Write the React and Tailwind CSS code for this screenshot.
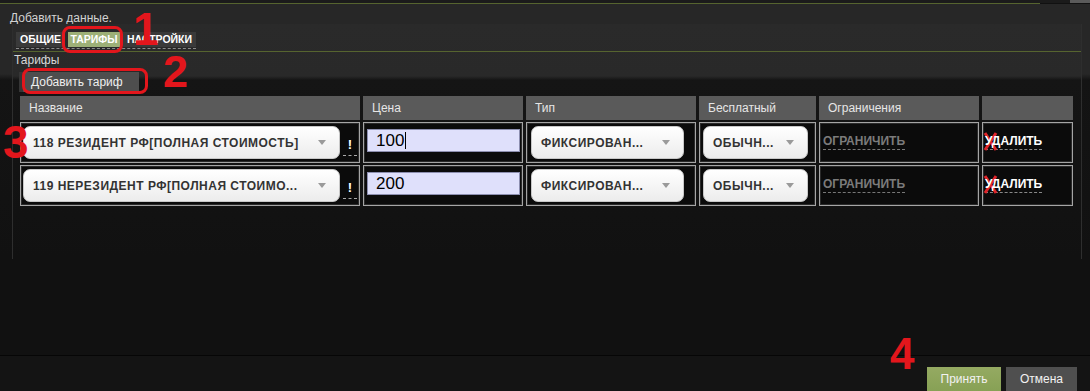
import React from "react";

function Caret() {
  return (
    <svg width="8" height="5" viewBox="0 0 8 5" className="shrink-0">
      <path d="M0 0 L8 0 L4 5 Z" fill="#9a9a9a" />
    </svg>
  );
}

function Select({ className, text }) {
  return (
    <div
      className={
        "h-[33px] rounded-[7px] border border-[#c8c8c8] bg-[linear-gradient(to_bottom,#ffffff,#ececec)] flex items-center justify-between pl-[9px] pr-[13px] text-[12px] font-bold text-[#333] tracking-[0.5px] whitespace-nowrap " +
        className
      }
    >
      <span>{text}</span>
      <Caret />
    </div>
  );
}

function Cell({ children, className = "" }) {
  return (
    <div
      className={
        "border border-[#a5a5a5] bg-[#0b0b0b] shadow-[inset_0_0_0_1px_#2a2a2a] flex " +
        className
      }
    >
      {children}
    </div>
  );
}

function Row({ name, price, cursor }) {
  return (
    <>
      <Cell className="items-center pl-[2px]">
        <Select className="w-[317px]" text={name} />
        <span className="ml-[3px] mt-[8px] w-[14px] text-center text-[13px] font-bold leading-[14px] text-white border-b border-dashed border-[#aaa] pb-[3px]">
          !
        </span>
      </Cell>
      <Cell className="items-start pl-[3px] pt-[6px]">
        <div className="h-[23px] w-[153px] bg-[#dfe0fb] border border-[#8d8fb0] flex items-center pl-[8px] text-[17px] leading-none text-black">
          <span className={cursor ? "border-r border-black pr-[1px]" : ""}>{price}</span>
        </div>
      </Cell>
      <Cell className="items-center pl-[4px]">
        <Select className="w-[153px]" text="ФИКСИРОВАН..." />
      </Cell>
      <Cell className="items-center pl-[3px]">
        <Select className="w-[105px]" text="ОБЫЧН..." />
      </Cell>
      <Cell className="items-center pl-[3px]">
        <span className="text-[12px] font-bold leading-[14px] text-[#7b7b7b] border-b border-dashed border-[#777] pb-[1px] mt-[-2px]">
          ОГРАНИЧИТЬ
        </span>
      </Cell>
      <Cell className="items-center pl-[2px]">
        <span className="relative text-[12px] font-bold leading-[14px] text-white border-b border-dashed border-[#888] pb-[1px] mt-[-2px]">
          <svg width="15" height="19" viewBox="0 0 15 19" className="absolute left-[-2px] top-[-2px]">
            <path d="M2 1 L13 18 M13 1 L2 18" stroke="#e0242a" strokeWidth="3" />
          </svg>
          <span className="relative">УДАЛИТЬ</span>
        </span>
      </Cell>
    </>
  );
}

export default function App() {
  return (
    <div className="relative w-[1090px] h-[391px] overflow-hidden bg-[#111111] font-['Liberation_Sans',Arial,sans-serif] flex flex-col">
      {/* top strip */}
      <div className="h-[3px] flex bg-[#1b1b1b] shrink-0">
        <div className="flex-1" />
        <div className="w-[20px] bg-[#5a5a5a]" />
      </div>
      <div className="h-px bg-[#56642f] mr-[50px] shrink-0" />
      <div className="h-[20px] shrink-0 bg-[#272727] pl-[10px] pt-[7px] text-[12px] leading-[14px] text-[#d2d2d2]">
        Добавить данные.
      </div>

      {/* main panel area */}
      <div className="h-[235px] shrink-0 bg-[linear-gradient(to_bottom,#272727_0px,#272727_50px,#141414_56px,#111111_100%)]">
        <div className="ml-[12px] w-[1070px] h-full border-l border-r border-[#2e2e2e] bg-[linear-gradient(to_bottom,#2a2a2a_0px,#292929_52px,#151515_56px,#111111_100%)] flex flex-col">
          {/* tabs */}
          <div className="pt-[8px] pl-[3px] flex">
            <div className="flex gap-[3px] border-b border-dashed border-[#8a8a8a] pb-[1px]">
              <div className="h-[15px] w-[49px] bg-[#3a3a3a] flex items-center justify-center text-[10.5px] font-bold text-white">
                ОБЩИЕ
              </div>
              <div className="h-[15px] w-[52px] bg-[#9db077] flex items-center justify-center text-[10.5px] font-bold text-white">
                ТАРИФЫ
              </div>
              <div className="h-[15px] w-[73px] bg-[#3a3a3a] flex items-center justify-center text-[10.5px] font-bold text-white">
                НАСТРОЙКИ
              </div>
            </div>
          </div>
          <div className="mt-[2px] h-px bg-[#56642f]" />
          <div className="pl-[1px] text-[12px] leading-[14px] text-[#d8d8d8] mt-[1px]">Тарифы</div>
          <div className="mt-[5px] ml-[6px] flex">
            <div className="h-[20px] bg-[#363636] flex items-center pl-[4px]">
              <div className="h-[20px] w-[116px] bg-[#4e4e4e] flex items-center pl-[8px] text-[12px] text-[#eeeeee]">
                Добавить тариф
              </div>
            </div>
          </div>

          {/* table */}
          <div className="mt-[4px] ml-[7px] grid grid-cols-[340px_160px_170px_117px_160px_91px] gap-x-[3px] gap-y-[2px] auto-rows-[41px] grid-rows-[24px]">
            <div className="bg-[#5a5a5a] flex items-center pl-[9px] text-[12px] text-[#e6e6e6]">Название</div>
            <div className="bg-[#5a5a5a] flex items-center pl-[9px] text-[12px] text-[#e6e6e6]">Цена</div>
            <div className="bg-[#5a5a5a] flex items-center pl-[9px] text-[12px] text-[#e6e6e6]">Тип</div>
            <div className="bg-[#5a5a5a] flex items-center pl-[9px] text-[12px] text-[#e6e6e6]">Бесплатный</div>
            <div className="bg-[#5a5a5a] flex items-center pl-[9px] text-[12px] text-[#e6e6e6]">Ограничения</div>
            <div className="bg-[#5a5a5a]" />
            <Row name="118 РЕЗИДЕНТ РФ[ПОЛНАЯ СТОИМОСТЬ]" price="100" cursor />
            <Row name="119 НЕРЕЗИДЕНТ РФ[ПОЛНАЯ СТОИМО..." price="200" />
          </div>
        </div>
      </div>

      <div className="h-[96px] shrink-0" />
      <div className="h-px bg-[#060606] shrink-0" />
      <div className="flex-1 bg-[#141414] flex justify-end items-start pt-[11px] pr-[13px] gap-[5px]">
        <div className="h-[26px] w-[74px] bg-[linear-gradient(to_bottom,#95aa62,#86a054)] flex items-center justify-center pb-[2px] text-[12px] text-[#f2f2f2]">
          Принять
        </div>
        <div className="h-[26px] w-[71px] bg-[#4f4f4f] flex items-center justify-center pb-[2px] text-[12px] text-[#f2f2f2]">
          Отмена
        </div>
      </div>

      {/* red annotations */}
      <div className="absolute left-[62px] top-[26px] w-[61px] h-[27px] border-[3px] border-[#e3161c] rounded-[8px]" />
      <div className="absolute left-[22px] top-[68px] w-[126px] h-[26px] border-[3px] border-[#e3161c] rounded-[8px]" />
      <div className="absolute left-[133px] top-[6px] text-[46px] leading-none font-bold text-[#e3161c]">1</div>
      <div className="absolute left-[163px] top-[49px] text-[45px] leading-none font-bold text-[#e3161c]">2</div>
      <div className="absolute left-[3px] top-[119px] text-[46px] leading-none font-bold text-[#e3161c]">3</div>
      <div className="absolute left-[890px] top-[332px] text-[44px] leading-none font-bold text-[#e3161c]">4</div>
    </div>
  );
}
